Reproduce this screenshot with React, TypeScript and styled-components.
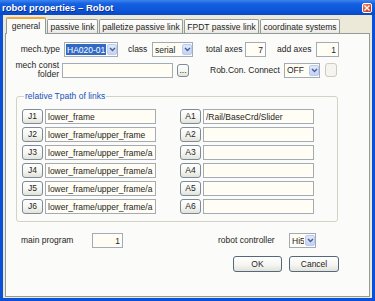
import React from 'react';
import styled, { createGlobalStyle } from 'styled-components';

const xpBlue = '#0b50d8';
const xpBorder = '#919b9c';
const fieldBg = '#fffdf4';
const fieldBorder = '#a3acb6';

const GlobalStyle = createGlobalStyle`
  html, body {
    margin: 0;
    padding: 0;
    background: #ffffff;
  }
  body {
    font-family: 'Liberation Sans', Arial, sans-serif;
    font-size: 8.5px;
    color: #1e1e1e;
  }
  * {
    box-sizing: border-box;
  }
`;

const Window = styled.div`
  width: 375px;
  height: 301px;
  display: flex;
  flex-direction: column;
`;

const TitleBar = styled.div`
  height: 15px;
  flex: 0 0 15px;
  display: flex;
  align-items: center;
  justify-content: space-between;
  padding: 0 3px 0 2px;
  background: linear-gradient(180deg, #3d86f0 0%, #1660e0 25%, #0a55da 70%, #0848c4 100%);
`;

const Title = styled.span`
  font-weight: bold;
  font-size: 9.5px;
  color: #ffffff;
  text-shadow: 1px 1px 0 #0a2a8c;
  white-space: nowrap;
`;

const CloseButton = styled.div`
  width: 10px;
  height: 10px;
  border: 1px solid #ffffff;
  border-radius: 2px;
  background: linear-gradient(135deg, #f08a6c 0%, #d9482a 60%, #c23a20 100%);
  display: flex;
  align-items: center;
  justify-content: center;
`;

const Frame = styled.div`
  flex: 1;
  display: flex;
  flex-direction: column;
  background: #ece9d8;
  border: 3px solid ${xpBlue};
  border-top: 0;
  padding: 2px 2px 1px 2px;
`;

const TabStrip = styled.div`
  height: 16px;
  display: flex;
  align-items: flex-end;
  gap: 1px;
  padding-left: 1px;
  position: relative;
  z-index: 1;
`;

const Tab = styled.div<{ $w: number; $active?: boolean }>`
  width: ${p => p.$w}px;
  height: ${p => (p.$active ? 17 : 14)}px;
  margin-bottom: ${p => (p.$active ? -1 : 0)}px;
  display: flex;
  align-items: center;
  justify-content: center;
  white-space: nowrap;
  border: 1px solid ${xpBorder};
  border-bottom: 0;
  border-radius: 2px 2px 0 0;
  border-top: ${p => (p.$active ? '2px solid #f2a93a' : `1px solid ${xpBorder}`)};
  background: ${p => (p.$active ? '#fbfbf9' : 'linear-gradient(180deg, #ffffff 0%, #f4f3ee 70%, #e8e7e0 100%)')};
  padding-bottom: ${p => (p.$active ? 2 : 0)}px;
`;

const Panel = styled.div`
  flex: 1;
  border: 1px solid ${xpBorder};
  background: #fbfbf9;
  padding-top: 8px;
  display: flex;
  flex-direction: column;
`;

const Row = styled.div<{ $h: number; $mt?: number; $pl?: number }>`
  display: flex;
  align-items: center;
  height: ${p => p.$h}px;
  margin-top: ${p => p.$mt ?? 0}px;
  padding-left: ${p => p.$pl ?? 0}px;
`;

const Label = styled.span<{ $w?: number; $ml?: number; $right?: boolean }>`
  flex: 0 0 auto;
  width: ${p => (p.$w ? `${p.$w}px` : 'auto')};
  margin-left: ${p => p.$ml ?? 0}px;
  text-align: ${p => (p.$right ? 'right' : 'left')};
  white-space: nowrap;
  line-height: 9px;
`;

const TextBox = styled.input<{ $w: number; $ml?: number; $right?: boolean }>`
  flex: 0 0 auto;
  width: ${p => p.$w}px;
  height: 15px;
  margin: 0 0 0 ${p => p.$ml ?? 0}px;
  padding: 0 2px;
  border: 1px solid ${fieldBorder};
  background: ${fieldBg};
  font: inherit;
  color: #1e1e1e;
  text-align: ${p => (p.$right ? 'right' : 'left')};
  outline: none;
`;

const SelectBox = styled.div<{ $w: number; $ml?: number }>`
  flex: 0 0 auto;
  width: ${p => p.$w}px;
  height: 15px;
  margin-left: ${p => p.$ml ?? 0}px;
  display: flex;
  align-items: stretch;
  border: 1px solid ${fieldBorder};
  background: ${fieldBg};
  padding: 1px 0 1px 1px;
`;

const SelectValue = styled.span<{ $selected?: boolean }>`
  flex: 1;
  display: flex;
  align-items: center;
  padding-left: 1px;
  white-space: nowrap;
  overflow: hidden;
  background: ${p => (p.$selected ? '#316ac5' : 'transparent')};
  color: ${p => (p.$selected ? '#ffffff' : '#1e1e1e')};
  margin-right: 1px;
`;

const SelectArrow = styled.span`
  flex: 0 0 10px;
  display: flex;
  align-items: center;
  justify-content: center;
  border-radius: 2px;
  background: linear-gradient(180deg, #dfe8fd 0%, #c2d3fb 100%);
  border: 1px solid #b9cbf3;
`;

const PushButton = styled.div<{ $w: number; $h?: number; $ml?: number; $disabled?: boolean }>`
  flex: 0 0 auto;
  width: ${p => p.$w}px;
  height: ${p => p.$h ?? 15}px;
  margin-left: ${p => p.$ml ?? 0}px;
  display: flex;
  align-items: center;
  justify-content: center;
  border: 1px solid ${p => (p.$disabled ? '#cdcbbd' : '#7d8a98')};
  border-radius: 3px;
  background: ${p =>
    p.$disabled ? '#f5f4ef' : 'linear-gradient(180deg, #ffffff 0%, #f4f4f0 60%, #e2e2da 100%)'};
  color: #1e1e1e;
  white-space: nowrap;
  line-height: 1;
`;

const DialogButton = styled(PushButton)`
  border-color: #56687c;
  height: 16px;
`;

const GroupBox = styled.fieldset`
  margin: 13px 0 0 10px;
  width: 322px;
  padding: 7px 0 7px 5px;
  border: 1px solid #d3d2c6;
  border-radius: 3px;
`;

const GroupTitle = styled.legend`
  padding: 0 1px;
  margin-left: 2px;
  color: #2052b8;
  line-height: 11px;
`;

const LinkColumns = styled.div`
  display: flex;
  gap: 24px;
`;

const LinkColumn = styled.div`
  display: flex;
  flex-direction: column;
  gap: 3px;
`;

const LinkRow = styled.div`
  display: flex;
  align-items: center;
  gap: 2px;
`;

const ButtonRow = styled.div`
  display: flex;
  justify-content: flex-end;
  gap: 7px;
  margin-top: 8px;
  padding-right: 30px;
`;

const Chevron = () => (
  <svg width="7" height="5" viewBox="0 0 7 5">
    <path d="M1 1 L3.5 3.6 L6 1" fill="none" stroke="#4d6185" strokeWidth="1.4" />
  </svg>
);

const Select: React.FC<{ value: string; w: number; ml?: number; selected?: boolean }> = ({
  value,
  w,
  ml,
  selected,
}) => (
  <SelectBox $w={w} $ml={ml}>
    <SelectValue $selected={selected}>{value}</SelectValue>
    <SelectArrow>
      <Chevron />
    </SelectArrow>
  </SelectBox>
);

const jLinks = [
  'lower_frame',
  'lower_frame/upper_frame',
  'lower_frame/upper_frame/a',
  'lower_frame/upper_frame/a',
  'lower_frame/upper_frame/a',
  'lower_frame/upper_frame/a',
];
const aLinks = ['/Rail/BaseCrd/Slider', '', '', '', '', ''];

const tabs = [
  { name: 'general', w: 40 },
  { name: 'passive link', w: 51 },
  { name: 'palletize passive link', w: 84 },
  { name: 'FPDT passive link', w: 75 },
  { name: 'coordinate systems', w: 80 },
];

export default function App() {
  return (
    <>
      <GlobalStyle />
      <Window>
        <TitleBar>
          <Title>robot properties – Robot</Title>
          <CloseButton>
            <svg width="6" height="6" viewBox="0 0 6 6">
              <path d="M0.5 0.5 L5.5 5.5 M5.5 0.5 L0.5 5.5" stroke="#ffffff" strokeWidth="1.4" />
            </svg>
          </CloseButton>
        </TitleBar>
        <Frame>
          <TabStrip>
            {tabs.map((t, i) => (
              <Tab key={t.name} $w={t.w} $active={i === 0}>
                {t.name}
              </Tab>
            ))}
          </TabStrip>
          <Panel>
            <Row $h={15}>
              <Label $w={54} $right>
                mech.type
              </Label>
              <Select value="HA020-01" w={54} ml={4} selected />
              <Label $w={20} $ml={10}>
                class
              </Label>
              <Select value="serial" w={41} ml={4} />
              <Label $w={37} $ml={13}>
                total axes
              </Label>
              <TextBox $w={21} $ml={2} $right readOnly value="7" />
              <Label $w={36} $ml={11}>
                add axes
              </Label>
              <TextBox $w={23} $ml={3} $right readOnly value="1" />
            </Row>
            <Row $h={16} $mt={5}>
              <Label $w={53} $right>
                mech const
                <br />
                folder
              </Label>
              <TextBox $w={111} $ml={3} readOnly value="" />
              <PushButton $w={12} $h={13} $ml={4}>
                ...
              </PushButton>
              <Label $w={72} $ml={21}>
                Rob.Con. Connect
              </Label>
              <Select value="OFF" w={36} ml={2} />
              <PushButton $w={12} $h={14} $ml={5} $disabled />
            </Row>
            <GroupBox>
              <GroupTitle>relative Tpath of links</GroupTitle>
              <LinkColumns>
                <LinkColumn>
                  {jLinks.map((v, i) => (
                    <LinkRow key={i}>
                      <PushButton $w={21}>J{i + 1}</PushButton>
                      <TextBox $w={111} readOnly value={v} />
                    </LinkRow>
                  ))}
                </LinkColumn>
                <LinkColumn>
                  {aLinks.map((v, i) => (
                    <LinkRow key={i}>
                      <PushButton $w={21}>A{i + 1}</PushButton>
                      <TextBox $w={111} readOnly value={v} />
                    </LinkRow>
                  ))}
                </LinkColumn>
              </LinkColumns>
            </GroupBox>
            <Row $h={15} $mt={11} $pl={15}>
              <Label $w={71}>main program</Label>
              <TextBox $w={31} $right readOnly value="1" />
              <Label $w={71} $ml={95}>
                robot controller
              </Label>
              <Select value="Hi5" w={27} ml={0} />
            </Row>
            <ButtonRow>
              <DialogButton $w={49}>OK</DialogButton>
              <DialogButton $w={50}>Cancel</DialogButton>
            </ButtonRow>
          </Panel>
        </Frame>
      </Window>
    </>
  );
}
